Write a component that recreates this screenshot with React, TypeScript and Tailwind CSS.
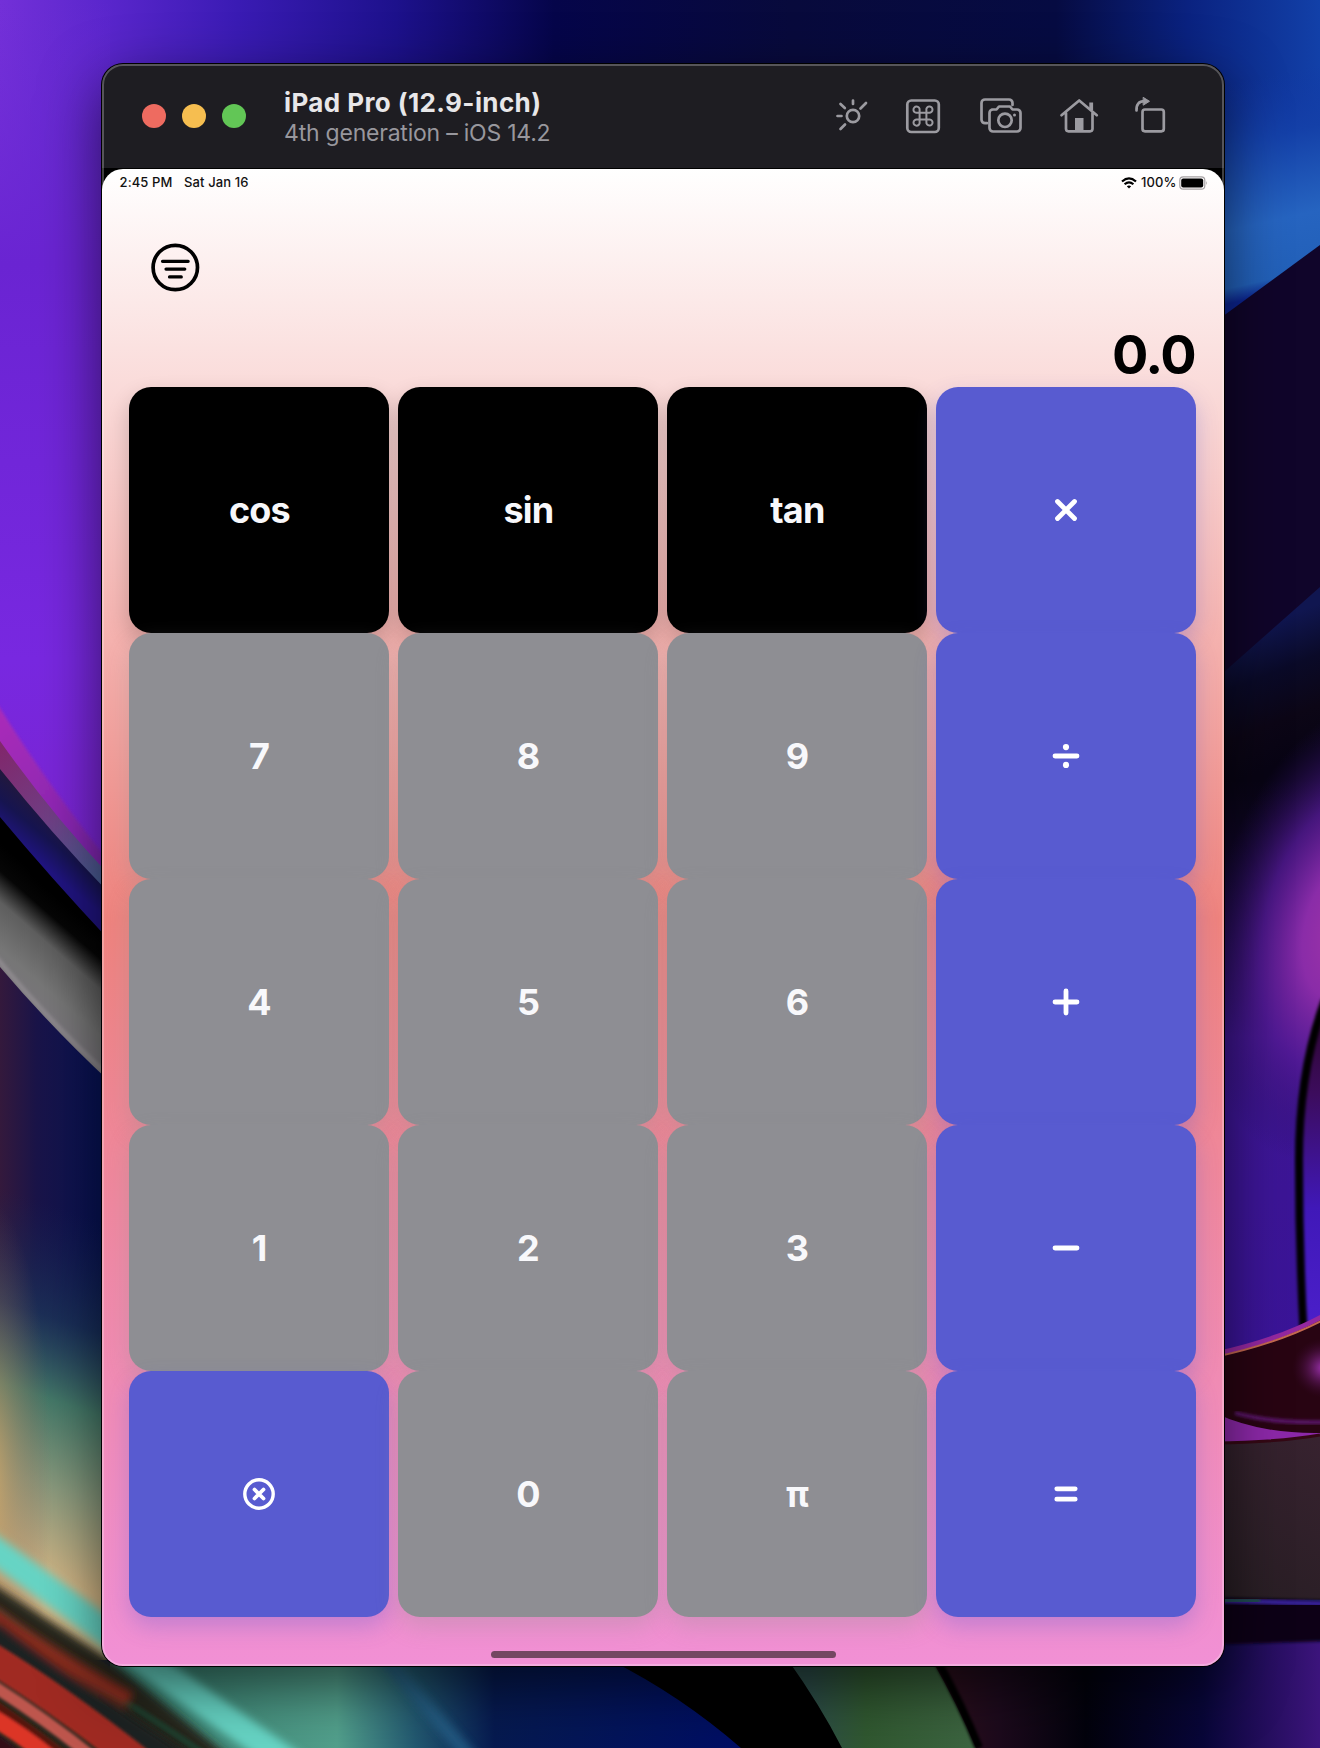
import React from "react";

const FONT = "font-['Inter','Liberation_Sans',sans-serif]";

function Wallpaper() {
  return (
    <svg className="absolute inset-0 h-full w-full" viewBox="0 0 1320 1748" preserveAspectRatio="none">
      <defs>
        <linearGradient id="top" x1="0" x2="1320" y1="0" y2="0" gradientUnits="userSpaceOnUse">
          <stop offset="0" stopColor="#7330d8" />
          <stop offset="0.08" stopColor="#5a26cc" />
          <stop offset="0.18" stopColor="#3a1bb4" />
          <stop offset="0.3" stopColor="#1d118c" />
          <stop offset="0.42" stopColor="#05054a" />
          <stop offset="0.6" stopColor="#080a3c" />
          <stop offset="0.8" stopColor="#060b42" />
          <stop offset="0.9" stopColor="#0a2280" />
          <stop offset="1" stopColor="#1240a8" />
        </linearGradient>
        <linearGradient id="purple" x1="0" x2="0" y1="0" y2="1">
          <stop offset="0" stopColor="#6c2ad4" stopOpacity="0" />
          <stop offset="0.3" stopColor="#6a24d2" />
          <stop offset="0.75" stopColor="#7828e0" />
          <stop offset="1" stopColor="#7a24d0" />
        </linearGradient>
        <linearGradient id="mag" x1="0" x2="104" y1="720" y2="870" gradientUnits="userSpaceOnUse">
          <stop offset="0" stopColor="#a82cb8" />
          <stop offset="1" stopColor="#7c24b0" />
        </linearGradient>
        <linearGradient id="mud" x1="0" x2="104" y1="750" y2="880" gradientUnits="userSpaceOnUse">
          <stop offset="0" stopColor="#80286c" />
          <stop offset="0.5" stopColor="#703e84" />
          <stop offset="1" stopColor="#486098" />
        </linearGradient>
        <linearGradient id="indigo" x1="40" x2="10" y1="802" y2="838" gradientUnits="userSpaceOnUse">
          <stop offset="0" stopColor="#22183c" />
          <stop offset="0.5" stopColor="#161450" />
          <stop offset="1" stopColor="#201480" />
        </linearGradient>
        <linearGradient id="gray" x1="60" x2="-10" y1="895" y2="975" gradientUnits="userSpaceOnUse">
          <stop offset="0" stopColor="#000" />
          <stop offset="0.2" stopColor="#060606" />
          <stop offset="0.42" stopColor="#5e5e5e" />
          <stop offset="0.75" stopColor="#767676" />
          <stop offset="1" stopColor="#7a767c" />
        </linearGradient>
        <linearGradient id="navy" x1="0" x2="104" y1="0" y2="0" gradientUnits="userSpaceOnUse">
          <stop offset="0" stopColor="#34193c" />
          <stop offset="0.35" stopColor="#1a1448" />
          <stop offset="1" stopColor="#061256" />
        </linearGradient>
        <linearGradient id="cream" x1="100" x2="-10" y1="1220" y2="1560" gradientUnits="userSpaceOnUse">
          <stop offset="0" stopColor="#182858" stopOpacity="0" />
          <stop offset="0.3" stopColor="#1e3a5c" stopOpacity="0.7" />
          <stop offset="0.52" stopColor="#447868" />
          <stop offset="0.75" stopColor="#88987c" />
          <stop offset="1" stopColor="#d0b484" />
        </linearGradient>
        <radialGradient id="sand" cx="0" cy="0" r="1" gradientUnits="userSpaceOnUse" gradientTransform="translate(-12 1480) scale(64 280)">
          <stop offset="0" stopColor="#d8ac68" stopOpacity="0.85" />
          <stop offset="0.5" stopColor="#a88460" stopOpacity="0.4" />
          <stop offset="1" stopColor="#805850" stopOpacity="0" />
        </radialGradient>
        <linearGradient id="bottom" x1="180" x2="741" y1="0" y2="0" gradientUnits="userSpaceOnUse">
          <stop offset="0" stopColor="#3c8474" />
          <stop offset="0.28" stopColor="#52a08c" />
          <stop offset="0.42" stopColor="#225870" />
          <stop offset="0.56" stopColor="#061a50" />
          <stop offset="1" stopColor="#000e64" />
        </linearGradient>
        <linearGradient id="green" x1="810" x2="970" y1="0" y2="0" gradientUnits="userSpaceOnUse">
          <stop offset="0" stopColor="#2c4c48" />
          <stop offset="0.35" stopColor="#305830" />
          <stop offset="1" stopColor="#3c6440" />
        </linearGradient>
        <linearGradient id="corner" x1="930" x2="1320" y1="0" y2="0" gradientUnits="userSpaceOnUse">
          <stop offset="0" stopColor="#30101c" />
          <stop offset="0.18" stopColor="#1c0a1c" />
          <stop offset="0.4" stopColor="#02020c" />
          <stop offset="0.7" stopColor="#080638" />
          <stop offset="1" stopColor="#3c147c" />
        </linearGradient>
        <linearGradient id="sky" x1="1225" x2="1290" y1="0" y2="290" gradientUnits="userSpaceOnUse">
          <stop offset="0.28" stopColor="#1238a4" stopOpacity="0" />
          <stop offset="0.48" stopColor="#1440a8" />
          <stop offset="0.76" stopColor="#2664c0" />
          <stop offset="0.95" stopColor="#2260b8" />
          <stop offset="1" stopColor="#0c2490" />
        </linearGradient>
        <linearGradient id="deep" x1="1240" x2="1290" y1="635" y2="760" gradientUnits="userSpaceOnUse">
          <stop offset="0" stopColor="#101650" />
          <stop offset="0.35" stopColor="#0a0a28" />
          <stop offset="0.7" stopColor="#0c0616" />
          <stop offset="1" stopColor="#080414" />
        </linearGradient>
        <radialGradient id="glow" cx="0" cy="0" r="1" gradientUnits="userSpaceOnUse" gradientTransform="translate(1345 930) rotate(14) scale(135 235)">
          <stop offset="0" stopColor="#a034a8" />
          <stop offset="0.3" stopColor="#8a2ca8" />
          <stop offset="0.6" stopColor="#541a94" stopOpacity="0.8" />
          <stop offset="1" stopColor="#280e60" stopOpacity="0" />
        </radialGradient>
        <linearGradient id="violet" x1="0" x2="0" y1="780" y2="1350" gradientUnits="userSpaceOnUse">
          <stop offset="0" stopColor="#1c0a48" stopOpacity="0" />
          <stop offset="0.45" stopColor="#3e1694" />
          <stop offset="1" stopColor="#3a1498" />
        </linearGradient>
        <linearGradient id="lens" x1="0" x2="0" y1="1010" y2="1340" gradientUnits="userSpaceOnUse">
          <stop offset="0" stopColor="#2c0430" />
          <stop offset="0.25" stopColor="#3c0c5c" />
          <stop offset="0.6" stopColor="#4018b8" />
          <stop offset="1" stopColor="#4c20cc" />
        </linearGradient>
        <radialGradient id="spot" cx="0" cy="0" r="1" gradientUnits="userSpaceOnUse" gradientTransform="translate(1324 1368) scale(32 30)">
          <stop offset="0" stopColor="#a434b8" />
          <stop offset="1" stopColor="#380830" stopOpacity="0" />
        </radialGradient>
        <linearGradient id="brown" x1="1224" x2="1320" y1="1590" y2="1440" gradientUnits="userSpaceOnUse">
          <stop offset="0" stopColor="#281e24" />
          <stop offset="1" stopColor="#37222f" />
        </linearGradient>
        <filter id="b1" x="-20%" y="-20%" width="140%" height="140%"><feGaussianBlur stdDeviation="1.5" /></filter>
        <filter id="b4" x="-20%" y="-20%" width="140%" height="140%"><feGaussianBlur stdDeviation="4.5" /></filter>
      </defs>
      <rect width="1320" height="1748" fill="url(#top)" />
      {/* left side */}
      <rect width="110" height="880" fill="url(#purple)" />
      <path d="M-10 695L0 708Q44 780 120 876V910H-10Z" fill="url(#mag)" filter="url(#b1)" />
      <path d="M0 741Q50 812 110 876V910H0Z" fill="url(#mud)" />
      <path d="M0 769Q50 832 110 894V960H0Z" fill="url(#indigo)" />
      <path d="M0 817Q50 877 110 941V1100H0Z" fill="url(#gray)" />
      <path d="M-10 950Q48 1022 120 1086" fill="none" stroke="#8c888c" strokeWidth="5" filter="url(#b1)" />
      <path d="M0 967Q50 1026 110 1082V1700H0Z" fill="url(#navy)" />
      <rect y="1150" width="110" height="510" fill="url(#cream)" />
      <rect y="1150" width="110" height="510" fill="url(#sand)" />
      {/* bottom */}
      <path d="M110 1640H800V1748H110Z" fill="url(#bottom)" />
      <path d="M370 1640L475 1763" stroke="#28648c" strokeWidth="14" filter="url(#b4)" opacity=".7" />
      <path d="M610 1660Q680 1695 741 1748H860V1660Z" fill="#000" />
      <path d="M930 1640H1320V1748H930Z" fill="url(#corner)" />
      <path d="M788 1660Q820 1705 842 1748H976Q958 1705 932 1660Z" fill="url(#green)" />
      <path d="M937 1660Q962 1705 979 1748" fill="none" stroke="#020202" strokeWidth="8" filter="url(#b1)" />
      <path d="M-20 1575L110 1660L240 1765H-20Z" fill="#26281f" filter="url(#b4)" />
      <path d="M-20 1540Q60 1597 110 1635T300 1770" fill="none" stroke="#66d4c4" strokeWidth="27" filter="url(#b4)" />
      <path d="M-10 1604Q50 1654 110 1692T220 1765" fill="none" stroke="#1e4430" strokeWidth="7" opacity=".7" filter="url(#b1)" />
      <g filter="url(#b4)" fill="none">
        <path d="M-10 1612Q40 1650 130 1700" stroke="#8a2a1c" strokeWidth="16" />
        <path d="M-10 1630Q60 1686 190 1770" stroke="#1e2422" strokeWidth="24" />
      </g>
      <g filter="url(#b1)" fill="none">
        <path d="M-10 1657Q60 1700 140 1763" stroke="#a02c20" strokeWidth="30" />
        <path d="M-10 1684Q50 1722 96 1760" stroke="#be564e" strokeWidth="12" />
        <path d="M-10 1701Q40 1735 76 1765" stroke="#54140e" strokeWidth="9" />
        <path d="M-10 1716Q30 1740 62 1768" stroke="#dc3426" strokeWidth="17" />
        <path d="M-10 1743L20 1765" stroke="#300818" strokeWidth="22" />
      </g>
      {/* right side */}
      <path d="M1215 0H1320V260L1215 325Z" fill="url(#sky)" />
      <path d="M1215 322L1320 245V600L1215 690Z" fill="#10052a" />
      <path d="M1215 680L1320 587V1360H1215Z" fill="url(#deep)" />
      <rect x="1215" y="780" width="105" height="590" fill="url(#violet)" />
      <rect x="1200" y="660" width="120" height="560" fill="url(#glow)" />
      <path d="M1325 1000Q1299 1070 1299 1160T1304 1340H1330Z" fill="url(#lens)" />
      <path d="M1325 1000Q1299 1070 1299 1160T1304 1340" fill="none" stroke="#020006" strokeWidth="8" filter="url(#b1)" />
      <path d="M1215 1356Q1280 1342 1325 1316V1450H1215Z" fill="#280412" />
      <rect x="1280" y="1330" width="40" height="80" fill="url(#spot)" />
      <path d="M1215 1354Q1280 1340 1325 1315" fill="none" stroke="#9428a0" strokeWidth="5" />
      <path d="M1215 1357Q1280 1343 1325 1319" fill="none" stroke="#c46850" strokeWidth="2" />
      <path d="M1215 1413Q1260 1434 1320 1433V1440L1215 1446Z" fill="#8c28a8" />
      <path d="M1235 1413Q1275 1424 1330 1422" fill="none" stroke="#581468" strokeWidth="4" filter="url(#b1)" />
      <path d="M1215 1443Q1280 1442 1320 1435V1600H1215Z" fill="url(#brown)" />
      <path d="M1215 1443Q1280 1442 1320 1435" fill="none" stroke="#340814" strokeWidth="3" />
      <path d="M1205 1597L1330 1600V1641L1205 1645Z" fill="#0e0614" filter="url(#b1)" />
      <path d="M1205 1600L1330 1604" fill="none" stroke="#38229c" strokeWidth="5" filter="url(#b1)" />
      <path d="M1205 1600L1260 1601" fill="none" stroke="#1c5440" strokeWidth="4" filter="url(#b1)" />
    </svg>
  );
}

const tool = { fill: "none", stroke: "#9c9ba1", strokeWidth: 2.7, strokeLinecap: "round", strokeLinejoin: "round" } as const;

function TitleBar() {
  return (
    <header className="flex h-[105px] shrink-0 items-center border-b border-black bg-[#1e1d22] pl-[40px]">
      <div className="flex gap-4">
        <span className="size-6 rounded-full bg-[#ee6b60]" />
        <span className="size-6 rounded-full bg-[#f6be50]" />
        <span className="size-6 rounded-full bg-[#62c656]" />
      </div>
      <div className="mt-[3px] ml-[38px] grow whitespace-nowrap">
        <div className="text-[26px] leading-[30px] font-bold tracking-[0.4px] text-[#e8e7e9]">iPad Pro (12.9-inch)</div>
        <div className="text-[23px] leading-[30px] tracking-[-0.22px] text-[#98979d]">4th generation – iOS 14.2</div>
      </div>
      <svg className="h-[60px] w-[360px] shrink-0" viewBox="820 86 360 60" {...tool}>
        <circle cx="853" cy="116" r="6.2" />
        <path d="M853 100.500V104M840.500 104L844.800 108M866 103L860.500 108.500M837.500 116H841.500M840.500 129L845 124.500" />
        <rect x="907.300" y="100.500" width="31.500" height="31.500" rx="4" />
        <path strokeWidth="2" d="M919.600 112.700h6.800v6.800h-6.800ZM919.600 112.700h-2.300a3.100 3.100 0 1 1 2.300-2.500ZM926.400 112.700v-2.300a3.100 3.100 0 1 1 2.500 2.300ZM919.600 119.500v2.300a3.100 3.100 0 1 1-2.500-2.300ZM926.400 119.500h2.300a3.100 3.100 0 1 1-2.300 2.500Z" />
        <path d="M987 123.200H985A3.500 3.500 0 0 1 981.500 119.700V103A3.500 3.500 0 0 1 985 99.500H1009A3.500 3.500 0 0 1 1012.500 103V105" />
        <path d="M992 109.500H996.500L999 106.500H1010L1012.500 109.500H1017A3.500 3.500 0 0 1 1020.500 113V128A3.500 3.500 0 0 1 1017 131.500H993A3.500 3.500 0 0 1 989.500 128V113A3.500 3.500 0 0 1 993 109.500Z" />
        <circle cx="1005" cy="120.300" r="6.700" />
        <circle cx="1014.500" cy="115" r="1.500" fill="#9c9ba1" stroke="none" />
        <path d="M1061.500 115.200L1079.200 100.500L1096.800 115.200M1066 113V129A2.500 2.500 0 0 0 1068.500 131.300H1090A2.500 2.500 0 0 0 1092.500 129V113" />
        <path d="M1091.200 102.500V110" strokeWidth="3.800" strokeLinecap="butt" />
        <path d="M1075 118H1083.500V131H1075Z" fill="#9c9ba1" stroke="none" />
        <rect x="1142.500" y="109.500" width="21.300" height="21.800" rx="2.500" />
        <path d="M1136.500 110.500Q1136 101.200 1144.500 101.200" />
        <path d="M1143.500 97.500L1149.500 101.300L1143.500 105Z" fill="#9c9ba1" strokeWidth="1" />
      </svg>
      <div className="w-[44px] shrink-0" />
    </header>
  );
}

function StatusBar() {
  return (
    <div className="flex h-[26px] items-center justify-between pt-px pr-[16px] pl-[17.500px] text-[13px] font-medium text-[#111]">
      <div className="flex gap-[11.500px] tracking-[0.12px]"><span>2:45 PM</span><span>Sat Jan 16</span></div>
      <div className="flex items-center">
        <svg className="mr-[4.500px] h-3 w-4" viewBox="0 0 16 12" fill="none" stroke="#000" strokeWidth="2.200">
          <path d="M1 4.500Q8-1.800 15 4.500M3.600 7.300Q8 3.300 12.400 7.300" />
          <path d="M5.800 9.300Q8 7.600 10.200 9.300L8 11.600Z" fill="#000" stroke="none" />
        </svg>
        <span className="tracking-[0.1px]">100%</span>
        <svg className="ml-[2.500px] h-[14px] w-[29px]" viewBox="0 0 29 14">
          <rect x=".8" y=".8" width="25" height="12.400" rx="3.500" fill="none" stroke="#a6a2a4" strokeWidth="1.200" />
          <rect x="2.200" y="2.400" width="22" height="9.200" rx="2" fill="#000" />
          <path d="M27.300 5Q29 7 27.300 9Z" fill="#a6a2a4" />
        </svg>
      </div>
    </div>
  );
}

const symbols: Record<string, React.ReactNode> = {
  "×": <path d="M-8.500 -8.500L8.500 8.500M8.500 -8.500L-8.500 8.500" />,
  "÷": <><path d="M-11 0H11" /><circle cy="-8.900" r="3.100" fill="#fff" stroke="none" /><circle cy="8.900" r="3.100" fill="#fff" stroke="none" /></>,
  "+": <path d="M-11 0H11M0 -11V11" />,
  "−": <path d="M-11 0H11" />,
  "=": <path d="M-9.200 -5.200H9.200M-9.200 5.200H9.200" />,
  clear: <><circle r="14.200" strokeWidth="3.400" /><path strokeWidth="3.800" d="M-4.500 -4.500L4.500 4.500M4.500 -4.500L-4.500 4.500" /></>,
};

const keys = ["cos", "sin", "tan", "×", "7", "8", "9", "÷", "4", "5", "6", "+", "1", "2", "3", "−", "clear", "0", "π", "="];

function Key({ label }: { label: string }) {
  const symbol = symbols[label];
  const tone = symbol
    ? "bg-[#585bd0] shadow-[0_10px_22px_rgba(88,91,208,0.3)]"
    : label.length === 3
      ? "bg-black tracking-[-0.8px] shadow-[0_10px_22px_rgba(0,0,0,0.2)]"
      : "bg-[#8e8e93] shadow-[0_10px_22px_rgba(142,142,147,0.3)]";
  return (
    <button className={`flex items-center justify-center rounded-[22px] text-[36px] font-bold text-[#f8f8fb] ${tone}`}>
      {symbol ? (
        <svg className="size-10" viewBox="-20 -20 40 40" fill="none" stroke="#fff" strokeWidth="4.800" strokeLinecap="round">{symbol}</svg>
      ) : label}
    </button>
  );
}

export default function App() {
  return (
    <main className={`relative h-[1748px] w-[1320px] overflow-hidden bg-black px-[102px] pt-[64px] ${FONT}`}>
      <Wallpaper />
      <div className="relative h-[1602px] w-[1122px] rounded-[21px] bg-black shadow-[0_0_0_1px_#000,0_20px_60px_rgba(0,0,0,0.6)]">
        <div className="flex h-full flex-col overflow-hidden rounded-[21px]">
          <TitleBar />
          <section className="flex grow flex-col rounded-t-[21px] bg-linear-to-b/srgb from-white via-[#ee837e] to-[#f190d5]">
            <StatusBar />
            <div className="pt-[48px] pl-[49px]">
              <svg className="size-[49px]" viewBox="0 0 49 49" fill="none" stroke="#000" strokeWidth="3.700" strokeLinecap="round">
                <circle cx="24.300" cy="24.500" r="22.200" />
                <path strokeWidth="3.200" d="M11.500 18.300H37.200M15 26.100H33.800M18.500 33.900H30.300" />
              </svg>
            </div>
            <div className="mt-[32px] h-[63px] pr-[29px] text-right text-[54px] leading-[62px] font-bold tracking-[-1.600px]">0.0</div>
            <div className="mr-[27.600px] ml-[27.400px] grid h-[1229.500px] grid-cols-4 grid-rows-5 gap-x-[9px] gap-y-[0.500px]">
              {keys.map((label) => <Key key={label} label={label} />)}
            </div>
            <div className="mt-[34px] h-[7px] w-[345px] self-center rounded-full bg-[#744762]" />
          </section>
        </div>
        <div className="pointer-events-none absolute inset-0 rounded-[21px] border-2 border-white/25" />
      </div>
    </main>
  );
}
